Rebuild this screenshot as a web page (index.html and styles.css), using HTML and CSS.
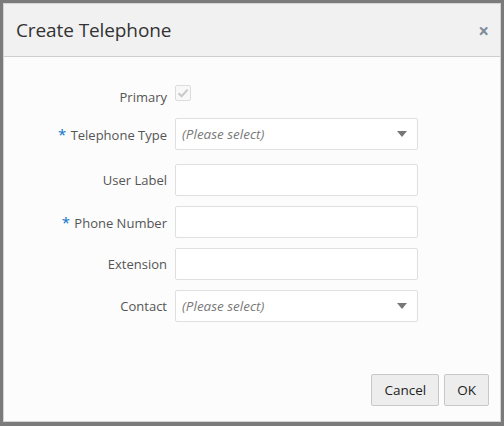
FILE: index.html
```html
<!DOCTYPE html>
<html>
<head>
<meta charset="utf-8">
<link rel="stylesheet" href="styles.css">
</head>
<body>
<div class="backdrop">
  <div class="dialog">
    <div class="header">
      <h1 class="title">Create Telephone</h1>
      <span class="close">×</span>
    </div>
    <div class="body">
      <div class="form">
        <div class="row row-primary">
          <label class="lbl">Primary</label>
          <div class="ctl"><span class="checkbox"><svg width="14" height="14" viewBox="0 0 14 14"><path d="M2.5 7.2 L5.6 10.2 L11.6 3.6" fill="none" stroke="#c8c8c8" stroke-width="2"/></svg></span></div>
        </div>
        <div class="row row-first">
          <label class="lbl"><span class="req">*</span> Telephone Type</label>
          <div class="ctl"><div class="select"><span class="ph">(Please select)</span><span class="arrow"></span></div></div>
        </div>
        <div class="row">
          <label class="lbl">User Label</label>
          <div class="ctl"><div class="input"></div></div>
        </div>
        <div class="row">
          <label class="lbl"><span class="req">*</span> Phone Number</label>
          <div class="ctl"><div class="input"></div></div>
        </div>
        <div class="row">
          <label class="lbl">Extension</label>
          <div class="ctl"><div class="input"></div></div>
        </div>
        <div class="row">
          <label class="lbl">Contact</label>
          <div class="ctl"><div class="select"><span class="ph">(Please select)</span><span class="arrow"></span></div></div>
        </div>
      </div>
    </div>
    <div class="footer">
      <button class="btn">Cancel</button>
      <button class="btn">OK</button>
    </div>
  </div>
</div>
</body>
</html>
```

FILE: styles.css
```css
html, body {
  margin: 0;
  padding: 0;
  height: 100%;
}
body {
  background: #7b7b7b;
  font-family: "Open Sans", "Noto Sans", sans-serif;
}
.backdrop {
  padding: 3px 3px 0 3px;
}
.dialog {
  box-sizing: border-box;
  width: 498px;
  height: 419px;
  background: #fcfcfc;
  border: 1px solid #d4d4d4;
  display: flex;
  flex-direction: column;
}
.header {
  box-sizing: border-box;
  height: 53px;
  flex: none;
  background: #f1f1f1;
  border-bottom: 1px solid #cfcfcf;
  display: flex;
  align-items: center;
  justify-content: space-between;
  padding: 0 11px 0 12px;
}
.title {
  margin: 0;
  font-weight: 400;
  font-size: 19px;
  line-height: 24px;
  color: #333;
  letter-spacing: -0.1px;
}
.close {
  font-size: 19px;
  font-weight: 700;
  color: #7f8c99;
  line-height: 1;
  margin-top: 3px;
}
.body {
  flex: 1;
  padding-top: 28px;
}
.form {
  display: flex;
  flex-direction: column;
  gap: 10px;
}
.row {
  display: flex;
  align-items: center;
  gap: 8px;
  height: 32px;
}
.row-primary {
  height: 16px;
  margin-bottom: 7px;
}
.row-first {
  margin-bottom: 4px;
}
.lbl {
  width: 163px;
  flex: none;
  text-align: right;
  font-size: 13px;
  color: #555;
}
.row-primary .lbl {
  margin-top: 8px;
}
.ctl {
  width: 243px;
  flex: none;
  display: flex;
}
.req {
  color: #0a72c8;
  font-size: 15px;
  margin-right: 1px;
}
.checkbox {
  width: 14px;
  height: 14px;
  border: 1px solid #dcdcdc;
  border-radius: 2px;
  background: #f8f8f8;
  display: flex;
}
.select, .input {
  box-sizing: border-box;
  width: 100%;
  height: 32px;
  border: 1px solid #dfdfdf;
  border-radius: 2px;
  background: #fff;
}
.select {
  display: flex;
  align-items: center;
  justify-content: space-between;
  padding: 0 10px 0 6px;
}
.ph {
  font-style: italic;
  color: #7a7a7a;
  font-size: 13.5px;
}
.arrow {
  width: 0;
  height: 0;
  border-left: 5px solid transparent;
  border-right: 5px solid transparent;
  border-top: 6px solid #777;
}
.footer {
  display: flex;
  justify-content: flex-end;
  gap: 5px;
  padding: 0 11px 15px 0;
}
.btn {
  height: 32px;
  box-sizing: border-box;
  background: #ededed;
  border: 1px solid #c8c8c8;
  border-radius: 2px;
  font-family: "Open Sans", "Noto Sans", sans-serif;
  font-size: 13.5px;
  color: #222;
  padding: 0 12px;
}
```
